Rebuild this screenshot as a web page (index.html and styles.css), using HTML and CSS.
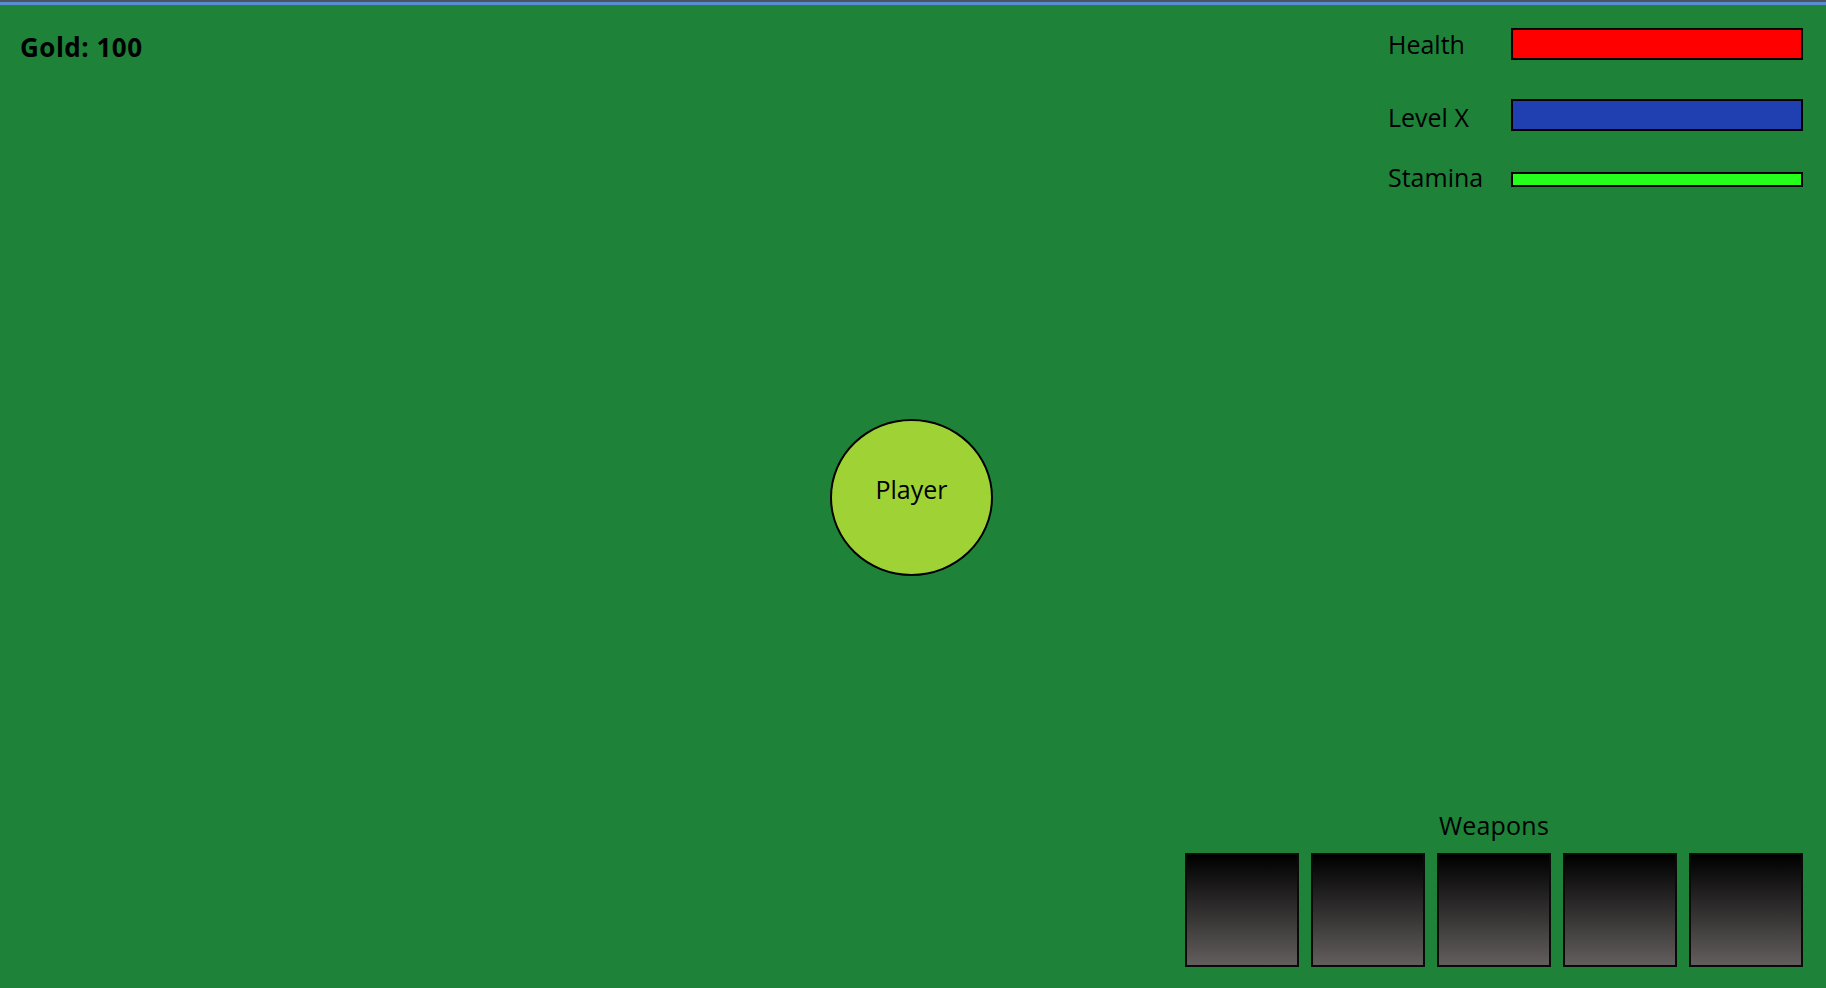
FILE: index.html
```html
<!DOCTYPE html>
<html lang="en">
<head>
<meta charset="utf-8">
<title>Game HUD</title>
<link rel="stylesheet" href="styles.css">
</head>
<body>
<div class="window">
  <div class="chrome"></div>
  <main class="game">
    <div class="hud-top">
      <div class="gold">Gold: 100</div>
      <div class="stats">
        <div class="stat stat-health">
          <span class="stat-label">Health</span>
          <div class="bar bar-health"></div>
        </div>
        <div class="stat stat-level">
          <span class="stat-label">Level X</span>
          <div class="bar bar-level"></div>
        </div>
        <div class="stat stat-stamina">
          <span class="stat-label">Stamina</span>
          <div class="bar bar-stamina"></div>
        </div>
      </div>
    </div>

    <div class="player"><span class="player-name">Player</span></div>

    <div class="hud-bottom">
      <section class="weapons">
        <div class="weapons-title">Weapons</div>
        <div class="weapon-slots">
          <div class="slot"></div>
          <div class="slot"></div>
          <div class="slot"></div>
          <div class="slot"></div>
          <div class="slot"></div>
        </div>
      </section>
    </div>
  </main>
</div>
</body>
</html>
```

FILE: styles.css
```css
html, body {
  margin: 0;
  padding: 0;
  height: 100%;
}

body {
  font-family: "Open Sans", "Noto Sans", "Liberation Sans", sans-serif;
  color: #000;
  background: #1f8239;
  overflow: hidden;
}

.window {
  width: 1826px;
  height: 988px;
  display: flex;
  flex-direction: column;
}

.chrome {
  height: 2px;
  background: #4b5262;
  border-bottom: 3px solid #5a8bd3;
  flex: none;
}

.game {
  position: relative;
  flex: 1;
  display: flex;
  flex-direction: column;
  justify-content: space-between;
  background: #1f8239;
}

.hud-top {
  display: flex;
  justify-content: space-between;
  align-items: flex-start;
  padding: 23px 23px 0 20px;
}

.gold {
  font-weight: 700;
  font-size: 26px;
  letter-spacing: 0.5px;
  line-height: 34px;
  margin-top: 2px;
}

.stats {
  display: flex;
  flex-direction: column;
}

.stat {
  display: flex;
  align-items: center;
  height: 32px;
}

.stat-level {
  margin-top: 39px;
}

.stat-stamina {
  margin-top: 32px;
}

.stat-label {
  width: 123px;
  margin-left: -1px;
  font-size: 25px;
  line-height: 34px;
}

.stat-level .stat-label {
  padding-top: 4px;
}

.stat-stamina .stat-label {
  padding-bottom: 4px;
}

.bar {
  width: 288px;
  height: 28px;
  border: 2px solid #000;
}

.bar-health {
  background: #ff0000;
}

.bar-level {
  background: #2040b2;
}

.bar-stamina {
  height: 11px;
  background: #26ff1b;
}

.player {
  position: absolute;
  left: 830px;
  top: 414px;
  width: 159px;
  height: 153px;
  border: 2px solid #000;
  border-radius: 50%;
  background: #9fd235;
  display: flex;
  align-items: center;
  justify-content: center;
}

.player-name {
  font-size: 25px;
  line-height: 34px;
  padding-bottom: 17px;
}

.hud-bottom {
  display: flex;
  justify-content: flex-end;
  padding: 0 23px 21px 0;
}

.weapons {
  display: flex;
  flex-direction: column;
  align-items: center;
}

.weapons-title {
  font-size: 25px;
  letter-spacing: 0.2px;
  line-height: 34px;
  margin-bottom: 11px;
  margin-top: -1px;
}

.weapon-slots {
  display: flex;
  gap: 12px;
}

.slot {
  width: 110px;
  height: 110px;
  border: 2px solid #0a0a0a;
  background: linear-gradient(to bottom, #000000 0%, #2b2929 45%, #625e5d 100%);
}
```
